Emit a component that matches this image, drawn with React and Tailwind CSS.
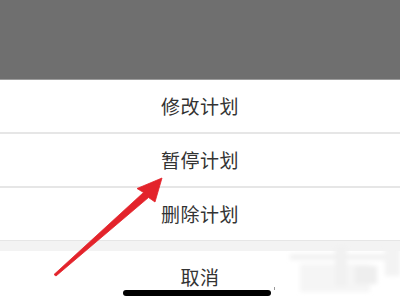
import React from "react";

const font = { fontFamily: '"Noto Sans CJK SC", "Noto Sans", sans-serif' };

function Item({ children, border = true }) {
  return (
    <div
      className={`flex items-center justify-center text-[19px] text-[#333333] ${
        border ? "h-[54px] border-b-2 border-[#e6e6e6]" : "h-[52px]"
      }`}
    >
      <span className="tracking-[0.5px]">{children}</span>
    </div>
  );
}

export default function App() {
  return (
    <div className="relative w-[400px] h-[301px] overflow-hidden bg-white" style={font}>
      <div className="flex flex-col h-full">
        <div className="h-[80px] bg-[#6f6f6f] border-b border-[#9c9c9c]" />
        <Item>修改计划</Item>
        <Item>暂停计划</Item>
        <Item border={false}>删除计划</Item>
        <div className="h-[11px] bg-[#f3f3f3] border-t border-[#e6e6e6]" />
        <div className="flex-1 flex flex-col items-center pt-[14px] text-[19px] text-[#333333]">
          <span className="tracking-[0.5px] leading-[24px]">取消</span>
          <div className="mt-[1px] mr-[6px] w-[148px] h-[6px] rounded-full bg-black" />
        </div>
      </div>

      {/* overlay drawing: red arrow, blurred watermark */}
      <svg className="absolute inset-0" width="400" height="301" viewBox="0 0 400 301">
        <defs>
          <filter id="b" x="-10%" y="-10%" width="120%" height="120%">
            <feGaussianBlur stdDeviation="2" />
          </filter>
        </defs>
        <g filter="url(#b)">
          <rect x="290" y="254" width="100" height="6" fill="#f2f2f2" />
          <rect x="300" y="264" width="70" height="28" fill="#f5f5f5" />
          <rect x="335" y="246" width="12" height="40" fill="#f1f1f1" />
          <rect x="355" y="266" width="22" height="18" fill="#eeeeee" />
          <rect x="385" y="246" width="15" height="30" fill="#f3f3f3" />
        </g>
        <rect x="274" y="287" width="1" height="3" fill="#999999" />
        <polygon
          points="162,178 137,188.5 143.5,192.5 54,274.5 56,276 148.5,197.5 155,202"
          fill="#e3232b"
          stroke="#e3232b"
          strokeWidth="0.8"
          strokeLinejoin="round"
        />
      </svg>
    </div>
  );
}
